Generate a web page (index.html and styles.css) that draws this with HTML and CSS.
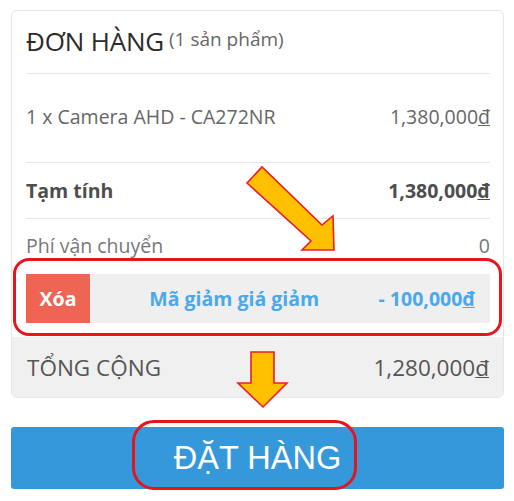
FILE: index.html
```html
<!DOCTYPE html>
<html lang="vi">
<head>
<meta charset="utf-8">
<link rel="stylesheet" href="styles.css">
</head>
<body>
<div class="page">
  <div class="card">
    <div class="head">
      <span class="title">ĐƠN HÀNG</span>
      <span class="count">(1 sản phẩm)</span>
    </div>
    <div class="row item">
      <span>1 x Camera AHD - CA272NR</span>
      <span>1,380,000<u>đ</u></span>
    </div>
    <div class="row sub">
      <span>Tạm tính</span>
      <span>1,380,000<u>đ</u></span>
    </div>
    <div class="row ship">
      <span>Phí vận chuyển</span>
      <span>0</span>
    </div>
    <div class="coupon">
      <span class="del">Xóa</span>
      <span class="label">Mã giảm giá giảm</span>
      <span class="amount">- 100,000<u>đ</u></span>
    </div>
    <div class="total">
      <span>TỔNG CỘNG</span>
      <span>1,280,000<u>đ</u></span>
    </div>
  </div>
  <button class="order">ĐẶT HÀNG</button>

  <div class="mark mark-coupon"></div>
  <div class="mark mark-order"></div>
  <svg class="arrows" width="514" height="501" viewBox="0 0 514 501">
    <polygon points="247,183 262,167 322,225 333,216 334,250 302,250 311,241" fill="#ffc000" stroke="#ee1c24" stroke-width="1.6" stroke-linejoin="miter"/>
    <polygon points="251,352 274,352 274,383 287,383 263,407 238,383 251,383" fill="#ffc000" stroke="#ee1c24" stroke-width="1.6"/>
  </svg>
</div>
</body>
</html>
```
FILE: styles.css
```css
* { box-sizing: border-box; }
html, body { margin: 0; padding: 0; background: #fff; }
body { font-family: "Open Sans", "Liberation Sans", sans-serif; }
.page {
  position: relative;
  width: 514px;
  height: 501px;
  padding: 10px 10px 0 11px;
}
.card {
  width: 493px;
  border: 1px solid #e6e6e6;
  border-radius: 6px;
  overflow: hidden;
}
.head, .row {
  margin: 0 13px 0 14px;
  display: flex;
  align-items: center;
  border-bottom: 1px solid #e8e8e8;
}
.head { height: 63px; gap: 5px; padding-bottom: 2px; }
.title { font-size: 26px; color: #2b2b2b; letter-spacing: -0.2px; }
.count { font-size: 19px; color: #666; padding-bottom: 4px; }
.row { justify-content: space-between; font-size: 19.5px; color: #666; }
.row u, .total u, .amount u { text-decoration-thickness: 1px; }
.item { height: 89px; padding-bottom: 3px; }
.sub { height: 56px; font-weight: 700; color: #4d4d4d; }
.ship { height: 55px; border-bottom: none; color: #777; padding-bottom: 2px; }
.coupon {
  margin: 0 13px 14px 14px;
  height: 49px;
  background: #efefef;
  display: flex;
  align-items: stretch;
  font-size: 19.5px;
  font-weight: 700;
}
.del {
  width: 64px;
  background: #ef6453;
  color: #fff;
  display: flex;
  align-items: center;
  justify-content: center;
}
.label {
  flex: 1;
  display: flex;
  align-items: center;
  justify-content: center;
  color: #4aa8ec;
}
.amount {
  display: flex;
  align-items: center;
  padding-right: 15px;
  color: #4aa8ec;
}
.total {
  height: 60px;
  background: #f0f0f0;
  display: flex;
  align-items: center;
  justify-content: space-between;
  padding: 0 14px 0 15px;
  font-size: 22.5px;
  color: #555;
}
.order {
  display: block;
  margin-top: 29px;
  width: 493px;
  height: 62px;
  border: none;
  border-radius: 3px;
  background: #3498db;
  color: #fff;
  font-family: "Liberation Sans", Arial, sans-serif;
  font-size: 32.5px;
  padding: 0;
}
.mark {
  position: absolute;
  border: 3px solid #e8141c;
  pointer-events: none;
}
.mark-coupon {
  left: 13px;
  top: 258px;
  width: 489px;
  height: 78px;
  border-radius: 16px;
}
.mark-order {
  left: 132px;
  top: 420px;
  width: 225px;
  height: 70px;
  border-radius: 22px;
}
.arrows {
  position: absolute;
  left: 0;
  top: 0;
  pointer-events: none;
}
```
